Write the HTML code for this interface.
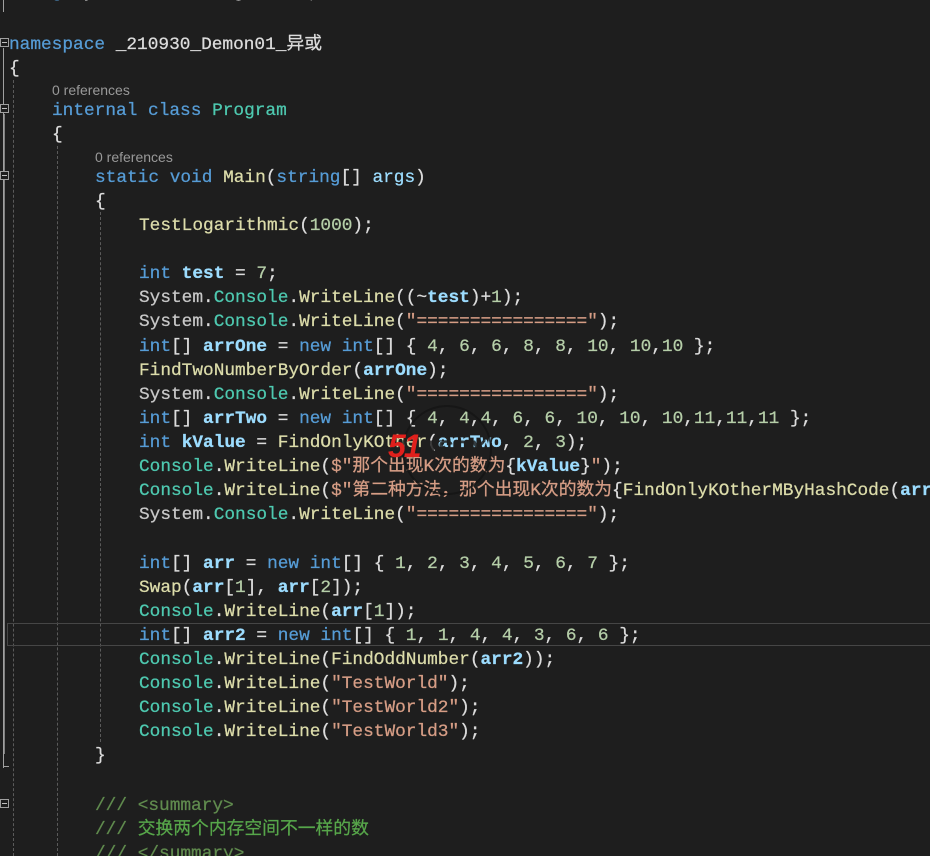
<!DOCTYPE html>
<html><head><meta charset="utf-8"><style>
html,body{margin:0;padding:0;background:#1e1e1e;width:930px;height:856px;overflow:hidden;position:relative}
.l{position:absolute;left:0;height:24px;line-height:24px;margin-top:2px;white-space:pre;font-family:"Liberation Mono","Noto Sans CJK SC",monospace;font-size:17.8px;color:#dcdcdc;-webkit-text-stroke:0.25px currentColor}
.cl{position:absolute;white-space:pre;font-family:"Liberation Sans",sans-serif;font-size:14px;color:#999;height:18px;line-height:18px;margin-top:1px}
.k{color:#569cd6}.t{color:#4ec9b0}.m{color:#dcdcaa}.s{color:#d69d85}.n{color:#b5cea8}.v{color:#9cdcfe;font-weight:bold}.g{color:#c8c8c8}.c{color:#57a64a}.ct{color:#608b4e}.p{color:#9cdcfe}
.gd{position:absolute;width:0;border-left:1px dashed #5a5a5a}
.ol{position:absolute;left:3px;width:0;border-left:1px solid #a0a0a0}
.bx{position:absolute;left:0;width:7px;height:7px;border:1px solid #a0a0a0;background:#1e1e1e}
.bx:after{content:"";position:absolute;left:1px;top:3px;width:5px;height:1px;background:#c0c0c0}
</style></head><body>
<div class="ol" style="top:0;height:12px"></div>
<div class="ol" style="top:48px;height:720px"></div>
<div class="ol" style="top:114px;height:640px;left:4px;border-color:#808080"></div>
<div class="bx" style="top:38px"></div>
<div class="bx" style="top:104px"></div>
<div class="bx" style="top:171px"></div>
<div class="bx" style="top:799px"></div>
<div style="position:absolute;left:3px;top:766px;width:6px;height:1px;background:#a0a0a0"></div>
<div class="gd" style="left:13px;top:80px;height:776px"></div>
<div class="gd" style="left:57px;top:146px;height:710px"></div>
<div class="gd" style="left:100px;top:212px;height:530px"></div>
<div style="position:absolute;left:7px;top:623px;width:930px;height:21px;border:1px solid #464646;border-right:none"></div>

<div class="l" style="top:-21px;left:9px"><span class="k">using</span> System.Threading.Tasks;</div>
<div class="l" style="top:31px;left:9px"><span class="k">namespace</span> _210930_Demon01_异或</div>
<div class="l" style="top:55px;left:9px">{</div>
<div class="cl" style="top:80px;left:52px">0 references</div>
<div class="l" style="top:97px;left:52px"><span class="k">internal</span> <span class="k">class</span> <span class="t">Program</span></div>
<div class="l" style="top:121px;left:52px">{</div>
<div class="cl" style="top:147px;left:95px">0 references</div>
<div class="l" style="top:164px;left:95px"><span class="k">static</span> <span class="k">void</span> <span class="m">Main</span>(<span class="k">string</span>[] <span class="p">args</span>)</div>
<div class="l" style="top:188px;left:95px">{</div>
<div class="l" style="top:212px;left:139px"><span class="m">TestLogarithmic</span>(<span class="n">1000</span>);</div>
<div class="l" style="top:260px;left:139px"><span class="k">int</span> <span class="v">test</span> = <span class="n">7</span>;</div>
<div class="l" style="top:284px;left:139px"><span class="g">System</span>.<span class="t">Console</span>.<span class="m">WriteLine</span>((~<span class="v">test</span>)+<span class="n">1</span>);</div>
<div class="l" style="top:308px;left:139px"><span class="g">System</span>.<span class="t">Console</span>.<span class="m">WriteLine</span>(<span class="s">"================"</span>);</div>
<div class="l" style="top:333px;left:139px"><span class="k">int</span>[] <span class="v">arrOne</span> = <span class="k">new</span> <span class="k">int</span>[] { <span class="n">4</span>, <span class="n">6</span>, <span class="n">6</span>, <span class="n">8</span>, <span class="n">8</span>, <span class="n">10</span>, <span class="n">10</span>,<span class="n">10</span> };</div>
<div class="l" style="top:357px;left:139px"><span class="m">FindTwoNumberByOrder</span>(<span class="v">arrOne</span>);</div>
<div class="l" style="top:381px;left:139px"><span class="g">System</span>.<span class="t">Console</span>.<span class="m">WriteLine</span>(<span class="s">"================"</span>);</div>
<div class="l" style="top:405px;left:139px"><span class="k">int</span>[] <span class="v">arrTwo</span> = <span class="k">new</span> <span class="k">int</span>[] { <span class="n">4</span>, <span class="n">4</span>,<span class="n">4</span>, <span class="n">6</span>, <span class="n">6</span>, <span class="n">10</span>, <span class="n">10</span>, <span class="n">10</span>,<span class="n">11</span>,<span class="n">11</span>,<span class="n">11</span> };</div>
<div class="l" style="top:429px;left:139px"><span class="k">int</span> <span class="v">kValue</span> = <span class="m">FindOnlyKOther</span>(<span class="v">arrTwo</span>, <span class="n">2</span>, <span class="n">3</span>);</div>
<div class="l" style="top:453px;left:139px"><span class="t">Console</span>.<span class="m">WriteLine</span>(<span class="s">$"那个出现K次的数为</span>{<span class="v">kValue</span>}<span class="s">"</span>);</div>
<div class="l" style="top:477px;left:139px"><span class="t">Console</span>.<span class="m">WriteLine</span>(<span class="s">$"第二种方法，那个出现K次的数为</span>{<span class="m">FindOnlyKOtherMByHashCode</span>(<span class="v">arrTwo</span></div>
<div class="l" style="top:501px;left:139px"><span class="g">System</span>.<span class="t">Console</span>.<span class="m">WriteLine</span>(<span class="s">"================"</span>);</div>
<div class="l" style="top:550px;left:139px"><span class="k">int</span>[] <span class="v">arr</span> = <span class="k">new</span> <span class="k">int</span>[] { <span class="n">1</span>, <span class="n">2</span>, <span class="n">3</span>, <span class="n">4</span>, <span class="n">5</span>, <span class="n">6</span>, <span class="n">7</span> };</div>
<div class="l" style="top:574px;left:139px"><span class="m">Swap</span>(<span class="v">arr</span>[<span class="n">1</span>], <span class="v">arr</span>[<span class="n">2</span>]);</div>
<div class="l" style="top:598px;left:139px"><span class="t">Console</span>.<span class="m">WriteLine</span>(<span class="v">arr</span>[<span class="n">1</span>]);</div>
<div class="l" style="top:622px;left:139px"><span class="k">int</span>[] <span class="v">arr2</span> = <span class="k">new</span> <span class="k">int</span>[] { <span class="n">1</span>, <span class="n">1</span>, <span class="n">4</span>, <span class="n">4</span>, <span class="n">3</span>, <span class="n">6</span>, <span class="n">6</span> };</div>
<div class="l" style="top:646px;left:139px"><span class="t">Console</span>.<span class="m">WriteLine</span>(<span class="m">FindOddNumber</span>(<span class="v">arr2</span>));</div>
<div class="l" style="top:670px;left:139px"><span class="t">Console</span>.<span class="m">WriteLine</span>(<span class="s">"TestWorld"</span>);</div>
<div class="l" style="top:694px;left:139px"><span class="t">Console</span>.<span class="m">WriteLine</span>(<span class="s">"TestWorld2"</span>);</div>
<div class="l" style="top:718px;left:139px"><span class="t">Console</span>.<span class="m">WriteLine</span>(<span class="s">"TestWorld3"</span>);</div>
<div class="l" style="top:742px;left:95px">}</div>
<div class="l" style="top:792px;left:95px"><span class="ct">///</span> <span class="ct">&lt;summary&gt;</span></div>
<div class="l" style="top:816px;left:95px"><span class="ct">///</span> <span class="c">交换两个内存空间不一样的数</span></div>
<div class="l" style="top:840px;left:95px"><span class="ct">///</span> <span class="ct">&lt;/summary&gt;</span></div>

<div style="position:absolute;left:402px;top:405px;width:86px;height:86px;border:2px solid rgba(20,20,20,0.8);border-radius:50%"></div>
<div style="position:absolute;left:388px;top:430px;font:italic bold 32px 'Liberation Sans',sans-serif;color:#e0201c;line-height:32px;letter-spacing:-2px">51<span style="color:rgba(30,30,30,0.85);font-size:24px;letter-spacing:0">ASPX</span></div>
</body></html>
